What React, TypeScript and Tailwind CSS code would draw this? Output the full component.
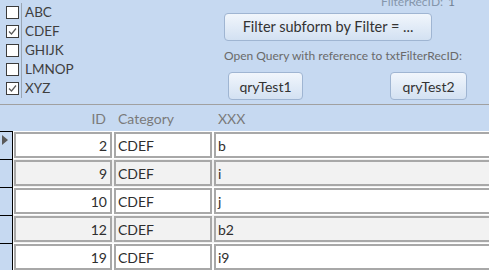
const options = [
  { label: "ABC", checked: false },
  { label: "CDEF", checked: true },
  { label: "GHIJK", checked: false },
  { label: "LMNOP", checked: false },
  { label: "XYZ", checked: true },
];

const rows = [
  { id: 2, category: "CDEF", xxx: "b" },
  { id: 9, category: "CDEF", xxx: "i" },
  { id: 10, category: "CDEF", xxx: "j" },
  { id: 12, category: "CDEF", xxx: "b2" },
  { id: 19, category: "CDEF", xxx: "i9" },
];

const font = "font-['Lato','Open_Sans',sans-serif]";

const Check = () => (
  <svg width="11" height="11" viewBox="0 0 11 11" className="block">
    <path d="M2 5.5 L4.5 8 L9 2.5" fill="none" stroke="#5a5a5a" strokeWidth="1.2" />
  </svg>
);

const AccessButton = ({ label, className }: { label: string; className: string }) => (
  <button
    className={`h-[28px] rounded-[4px] border border-[#9fb5d2] bg-gradient-to-b from-[#f1f6fc] to-[#d3e1f2] text-[#333] ${className}`}
  >
    {label}
  </button>
);

const App = () => {
  return (
    <div className={`h-[270px] w-[489px] overflow-hidden bg-[#c6d9f1] ${font}`}>
      {/* top form area */}
      <div className="flex h-[104px]">
        <div className="flex pl-[6px]">
          <div className="flex flex-col pt-[6px]">
            {options.map((o) => (
              <div key={o.label} className="h-[19px]">
                <div className="flex h-[13px] w-[13px] items-center justify-center border border-[#3c3c3c] bg-white">
                  {o.checked && <Check />}
                </div>
              </div>
            ))}
          </div>
          <div className="ml-[2px] mr-[3px] mt-[3px] h-[95px] w-px bg-[#9aa6b4]" />
          <div className="flex w-[60px] flex-col pt-[3px]">
            {options.map((o) => (
              <div key={o.label} className="h-[19px] text-[13.5px] leading-[19px] text-[#3f3f3f]">
                {o.label}
              </div>
            ))}
          </div>
        </div>
        <div className="ml-[139px] flex flex-1 flex-col">
          <div className="flex h-[13px] items-start justify-end pr-[34px] text-[12px] leading-[12px]">
            <span className="-mt-[4px] text-[#8596ab]">FilterRecID:</span>
            <span className="-mt-[4px] ml-[5px] text-[#6f7f93]">1</span>
          </div>
          <AccessButton label="Filter subform by Filter = ..." className="w-[208px] text-[14.5px]" />
          <div className="mt-[6px] text-[12px] leading-[17px] text-[#6a6a6a]">
            Open Query with reference to txtFilterRecID:
          </div>
          <div className="mt-[8px] flex">
            <AccessButton label="qryTest1" className="ml-[4px] w-[75px] text-[14px]" />
            <AccessButton label="qryTest2" className="ml-[87px] w-[77px] text-[14px]" />
          </div>
        </div>
      </div>

      {/* datasheet header */}
      <div className="flex h-[27px] items-center border-t border-[#a0a0a0] text-[14px] text-[#7a7a7a]">
        <div className="w-[106px] text-right">ID</div>
        <div className="ml-[12px] w-[100px]">Category</div>
        <div>XXX</div>
      </div>

      {/* rows */}
      {rows.map((r, i) => {
        const bg = i % 2 === 0 ? "bg-white" : "bg-[#f2f2f2]";
        return (
          <div key={r.id} className={`flex h-[28px] ${bg}`}>
            <div className="relative h-full w-[13px] shrink-0 border-r border-t border-black bg-[#c6d9f1]">
              {i === 0 && (
                <svg width="7" height="10" viewBox="0 0 7 10" className="absolute left-[2px] top-[3px]">
                  <path d="M0 0 L6 5 L0 10 Z" fill="#5a5a5a" />
                </svg>
              )}
            </div>
            <div className="ml-px mt-px flex h-[26px] w-[98px] shrink-0 items-center justify-end border-2 border-[#a8a8a8] pr-[3px] text-[14px] text-[#2e2e2e]">
              {r.id}
            </div>
            <div className="ml-[2px] mt-px flex h-[26px] w-[98px] shrink-0 items-center border-2 border-[#a8a8a8] pl-[2px] text-[14px] text-[#2e2e2e]">
              {r.category}
            </div>
            <div className="ml-[2px] mt-px flex h-[26px] w-[290px] shrink-0 items-center border-2 border-[#a8a8a8] pl-[2px] text-[14px] text-[#2e2e2e]">
              {r.xxx}
            </div>
          </div>
        );
      })}
    </div>
  );
};

export default App;
